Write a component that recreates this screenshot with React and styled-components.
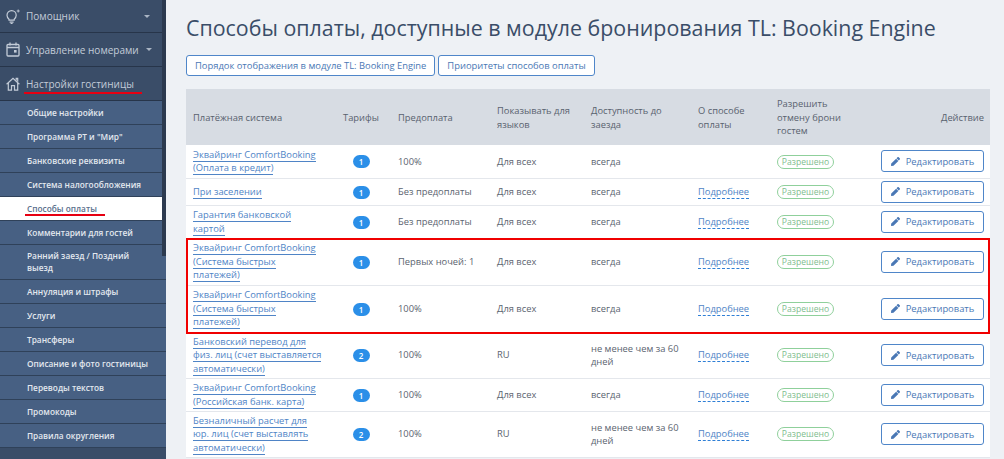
import React from 'react';
import styled, { createGlobalStyle } from 'styled-components';
import { FaPen } from 'react-icons/fa';

const GlobalStyle = createGlobalStyle`
    html, body {
        margin: 0;
        height: 459px;
        overflow: hidden;
        background: #eef1f5;
        font-family: "Open Sans", "Noto Sans", sans-serif;
    }
`

const Page = styled.div`
    display: flex;
    width: 1004px;
    height: 459px;
    overflow: hidden;
`

const Sidebar = styled.nav`
    position: relative;
    flex: 0 0 166px;
    width: 166px;
    min-width: 0;
    background: #3a4d68;
`

const Scrollbar = styled.div`
    position: absolute;
    top: 0;
    right: 0;
    width: 4px;
    height: 256px;
    background: #2c3a4f;
`

const TopItem = styled.div`
    display: flex;
    align-items: center;
    box-sizing: border-box;
    height: ${p => p.$height}px;
    padding-left: 6px;
    gap: 6px;
    color: #c3ccd8;
    font-size: 10px;
    border-bottom: 1px solid #27354a;
    white-space: nowrap;
    svg {
        flex: 0 0 14px;
    }
`

const Caret = styled.span`
    width: 0;
    height: 0;
    margin-left: ${p => p.$offset}px;
    border-left: 3px solid transparent;
    border-right: 3px solid transparent;
    border-top: 3px solid #aab5c4;
`

const Marked = styled.span`
    position: relative;
    &::after {
        content: "";
        position: absolute;
        left: -2px;
        right: -8px;
        bottom: ${p => p.$drop}px;
        height: 2px;
        background: #e60012;
    }
`

const SubItem = styled.div`
    display: flex;
    align-items: center;
    box-sizing: border-box;
    min-height: ${p => p.$height || 24}px;
    padding: 0 14px 0 27px;
    color: ${p => (p.$active ? '#5a6f8c' : '#e3e8ef')};
    background: ${p => (p.$active ? '#ffffff' : '#476083')};
    border-bottom: 1px solid #2f4159;
    font-size: 8.3px;
    font-weight: 600;
    line-height: 12px;
`

const Main = styled.main`
    flex: 1;
    min-width: 0;
    padding: 13px 14px 0 20px;
`

const Title = styled.h1`
    margin: 0;
    height: 28px;
    color: #3a4d68;
    font-size: 21.4px;
    font-weight: 400;
    line-height: 30px;
    white-space: nowrap;
`

const Toolbar = styled.div`
    display: flex;
    gap: 3px;
    margin-top: 14px;
`

const OutlineButton = styled.button`
    height: 21px;
    padding: 0 8px;
    background: #ffffff;
    border: 1px solid #4f86c9;
    border-radius: 3px;
    color: #4a78b5;
    font-family: inherit;
    font-size: 9.4px;
    white-space: nowrap;
`

const TableWrap = styled.div`
    position: relative;
    margin-top: 13px;
`

const Table = styled.table`
    width: 804px;
    table-layout: fixed;
    border-collapse: collapse;
    font-size: 9.35px;
    line-height: 13.5px;
    color: #5b6470;
`

const Head = styled.th`
    height: 56px;
    box-sizing: border-box;
    padding: 1px ${p => p.$padRight || 7}px 0 7px;
    background: #d7dce3;
    color: #59626f;
    font-weight: 400;
    text-align: ${p => p.$align || 'left'};
`

const Row = styled.tr`
    height: ${p => p.$height}px;
    background: #ffffff;
    border-bottom: 1px solid #e4e7ec;
`

const Cell = styled.td`
    padding: 0 ${p => p.$padRight || 7}px 0 7px;
    text-align: ${p => p.$align || 'left'};
`

const PayLink = styled.a`
    color: #4f84c6;
    border-bottom: 1px solid #4f84c6;
`

const MoreLink = styled.a`
    color: #4f84c6;
    border-bottom: 1px dashed #2f7fd6;
`

const Count = styled.span`
    display: inline-block;
    width: 17px;
    height: 13px;
    margin-right: 5px;
    border-radius: 7px;
    background: #2b8fe8;
    color: #ffffff;
    font-size: 8px;
    font-weight: 600;
    line-height: 13px;
    text-align: center;
    vertical-align: middle;
`

const Allowed = styled.span`
    display: inline-block;
    width: 57px;
    height: 14px;
    box-sizing: border-box;
    border: 1px solid #8fd09b;
    border-radius: 7px;
    color: #80bd8e;
    font-size: 8.6px;
    line-height: 12px;
    text-align: center;
    vertical-align: middle;
`

const EditButton = styled.button`
    display: inline-flex;
    align-items: center;
    justify-content: center;
    gap: 6px;
    width: 103px;
    height: 22px;
    padding: 0;
    background: #ffffff;
    border: 1px solid #4f86c9;
    border-radius: 3px;
    color: #4a78b5;
    font-family: inherit;
    font-size: 9.4px;
    vertical-align: middle;
    svg {
        width: 9px;
        height: 9px;
    }
`

const Highlight = styled.div`
    position: absolute;
    top: 149px;
    left: 0;
    width: 804px;
    height: 96px;
    box-sizing: border-box;
    border: 2px solid #f00000;
    pointer-events: none;
`

const BulbIcon = () => (
    <svg width="14" height="16" viewBox="0 0 14 16" fill="none" stroke="#c3ccd8" strokeWidth="1.2">
        <path d="M3 11.2C1.7 10 1 8.8 1 7.2a4.6 4.6 0 0 1 9.2 0c0 1.6-.7 2.8-2 4v1H3z" />
        <path d="M3.6 14.2h4M4.6 15.6h2" />
        <path d="M12.2 1.5v3M10.7 3h3" strokeWidth="0.9" />
    </svg>
)

const CalendarIcon = () => (
    <svg width="14" height="15" viewBox="0 0 14 15" fill="none" stroke="#c3ccd8" strokeWidth="1.3">
        <rect x="1" y="2.5" width="12" height="11.5" rx="1" />
        <path d="M1 5.5h12M4 .5v3M10 .5v3" />
        <rect x="8" y="8" width="2.6" height="2.6" fill="#c3ccd8" stroke="none" />
    </svg>
)

const HouseIcon = () => (
    <svg width="14" height="14" viewBox="0 0 14 14" fill="none" stroke="#c3ccd8" strokeWidth="1.2">
        <path d="M.6 7.2 7 1.2l6.4 6" />
        <path d="M2.3 6v7.2h3.2V8.6h3v4.6h3.2V6" />
        <path d="M10.2 3.4V1.4h1.5v3.4" />
    </svg>
)

const subItems = [
    { label: 'Общие настройки' },
    { label: 'Программа РТ и "Мир"' },
    { label: 'Банковские реквизиты' },
    { label: 'Система налогообложения' },
    { label: 'Способы оплаты', active: true },
    { label: 'Комментарии для гостей' },
    { label: 'Ранний заезд / Поздний выезд', height: 35 },
    { label: 'Аннуляция и штрафы' },
    { label: 'Услуги' },
    { label: 'Трансферы' },
    { label: 'Описание и фото гостиницы' },
    { label: 'Переводы текстов' },
    { label: 'Промокоды' },
    { label: 'Правила округления' },
];

const columns = [
    { label: 'Платёжная система', width: 150 },
    { label: 'Тарифы', width: 55 },
    { label: 'Предоплата', width: 99 },
    { label: 'Показывать для языков', width: 94 },
    { label: 'Доступность до заезда', width: 107 },
    { label: 'О способе оплаты', width: 79 },
    { label: 'Разрешить отмену брони гостем', width: 100, padRight: 25 },
    { label: 'Действие', width: 120, align: 'right', padRight: 6 },
];

const comfort = 'Эквайринг ComfortBooking';

const payments = [
    { height: 33, name: [comfort, '(Оплата в кредит)'], count: 1, prepay: '100%', langs: 'Для всех', term: 'всегда', noMore: true },
    { height: 27, name: ['При заселении'], count: 1, prepay: 'Без предоплаты', langs: 'Для всех', term: 'всегда' },
    { height: 33, name: ['Гарантия банковской', 'картой'], count: 1, prepay: 'Без предоплаты', langs: 'Для всех', term: 'всегда' },
    { height: 47, name: [comfort, '(Система быстрых', 'платежей)'], count: 1, prepay: 'Первых ночей: 1', langs: 'Для всех', term: 'всегда' },
    { height: 47, name: [comfort, '(Система быстрых', 'платежей)'], count: 1, prepay: '100%', langs: 'Для всех', term: 'всегда' },
    { height: 46, name: ['Банковский перевод для', 'физ. лиц (счет выставляется', 'автоматически)'], count: 2, prepay: '100%', langs: 'RU', term: 'не менее чем за 60 дней' },
    { height: 33, name: [comfort, '(Российская банк. карта)'], count: 1, prepay: '100%', langs: 'Для всех', term: 'всегда' },
    { height: 46, name: ['Безналичный расчет для', 'юр. лиц (счет выставлять', 'автоматически)'], count: 2, prepay: '100%', langs: 'RU', term: 'не менее чем за 60 дней' },
];

export default class App extends React.Component {
    render() {
        return (
            <Page>
                <GlobalStyle />
                <Sidebar>
                    <TopItem $height={33}><BulbIcon />Помощник<Caret $offset={59} /></TopItem>
                    <TopItem $height={34}><CalendarIcon />Управление номерами<Caret $offset={1} /></TopItem>
                    <TopItem $height={34}><HouseIcon /><Marked $drop={-3}>Настройки гостиницы</Marked></TopItem>
                    {subItems.map(item => (
                        <SubItem key={item.label} $active={item.active} $height={item.height}>
                            {item.active ? <Marked $drop={-1}>{item.label}</Marked> : <span>{item.label}</span>}
                        </SubItem>
                    ))}
                    <Scrollbar />
                </Sidebar>
                <Main>
                    <Title>Способы оплаты, доступные в модуле бронирования TL: Booking Engine</Title>
                    <Toolbar>
                        <OutlineButton>Порядок отображения в модуле TL: Booking Engine</OutlineButton>
                        <OutlineButton>Приоритеты способов оплаты</OutlineButton>
                    </Toolbar>
                    <TableWrap>
                        <Table>
                            <colgroup>
                                {columns.map(col => <col key={col.label} width={col.width} />)}
                            </colgroup>
                            <thead>
                                <tr>
                                    {columns.map(col => (
                                        <Head key={col.label} $align={col.align} $padRight={col.padRight}>{col.label}</Head>
                                    ))}
                                </tr>
                            </thead>
                            <tbody>
                                {payments.map((pay, i) => (
                                    <Row key={i} $height={pay.height}>
                                        <Cell>
                                            {pay.name.map((line, n) => (
                                                <React.Fragment key={n}>
                                                    <PayLink>{line}</PayLink>
                                                    {n < pay.name.length - 1 && <br />}
                                                </React.Fragment>
                                            ))}
                                        </Cell>
                                        <Cell $align="center"><Count>{pay.count}</Count></Cell>
                                        <Cell>{pay.prepay}</Cell>
                                        <Cell>{pay.langs}</Cell>
                                        <Cell>{pay.term}</Cell>
                                        <Cell>{!pay.noMore && <MoreLink>Подробнее</MoreLink>}</Cell>
                                        <Cell><Allowed>Разрешено</Allowed></Cell>
                                        <Cell $align="right" $padRight={6}><EditButton><FaPen />Редактировать</EditButton></Cell>
                                    </Row>
                                ))}
                            </tbody>
                        </Table>
                        <Highlight />
                    </TableWrap>
                </Main>
            </Page>
        );
    }
};
